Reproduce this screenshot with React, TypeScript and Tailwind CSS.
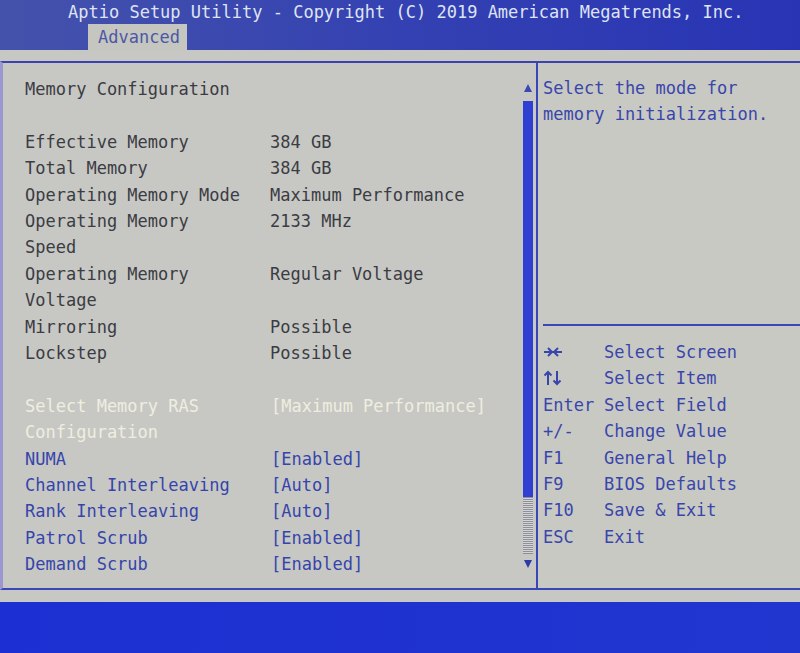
import React from 'react'

const info = [
  ['Effective Memory', '384 GB'],
  ['Total Memory', '384 GB'],
  ['Operating Memory Mode', 'Maximum Performance'],
  ['Operating Memory\nSpeed', '2133 MHz'],
  ['Operating Memory\nVoltage', 'Regular Voltage'],
  ['Mirroring', 'Possible'],
  ['Lockstep', 'Possible'],
]

const options = [
  ['NUMA', '[Enabled]'],
  ['Channel Interleaving', '[Auto]'],
  ['Rank Interleaving', '[Auto]'],
  ['Patrol Scrub', '[Enabled]'],
  ['Demand Scrub', '[Enabled]'],
]

const HArrows = () => (
  <svg width="20" height="14" viewBox="0 0 20 14" className="inline-block align-[-1px]">
    <path d="M1 7 H19" stroke="#3846ac" strokeWidth="2" />
    <path d="M5 3 L9 7 L5 11" stroke="#3846ac" strokeWidth="2" fill="none" />
    <path d="M15 3 L11 7 L15 11" stroke="#3846ac" strokeWidth="2" fill="none" />
  </svg>
)

const VArrows = () => (
  <svg width="20" height="16" viewBox="0 0 20 16" className="inline-block align-[-2px]">
    <path d="M5 2 V15" stroke="#3846ac" strokeWidth="2" />
    <path d="M1.5 5.5 L5 2 L8.5 5.5" stroke="#3846ac" strokeWidth="2" fill="none" />
    <path d="M14 1 V14" stroke="#3846ac" strokeWidth="2" />
    <path d="M10.5 10.5 L14 14 L17.5 10.5" stroke="#3846ac" strokeWidth="2" fill="none" />
  </svg>
)

const keys: [React.ReactNode, string][] = [
  [<HArrows />, 'Select Screen'],
  [<VArrows />, 'Select Item'],
  ['Enter', 'Select Field'],
  ['+/-', 'Change Value'],
  ['F1', 'General Help'],
  ['F9', 'BIOS Defaults'],
  ['F10', 'Save & Exit'],
  ['ESC', 'Exit'],
]

const Row = ({ label, value, cls, valCls }: { label: string; value: string; cls: string; valCls?: string }) => (
  <div className="flex">
    <div className={`w-[245px] whitespace-pre ${cls}`}>{label}</div>
    <div className={`whitespace-pre ${valCls ?? cls}`}>{value}</div>
  </div>
)

const App = () => {
  return (
    <div
      className="w-[800px] h-[653px] flex flex-col bg-[#c7c8c3] overflow-hidden text-[17px] leading-[26.4px]"
      style={{ fontFamily: '"DejaVu Sans Mono", "Liberation Mono", monospace' }}
    >
      {/* header */}
      <div className="h-[50px] shrink-0 bg-gradient-to-r from-[#4552ab] via-[#3441b2] to-[#2834b4] flex flex-col">
        <div className="h-[24px] pl-[68px] leading-[24px] text-[#dfe3f3] whitespace-pre">
          Aptio Setup Utility - Copyright (C) 2019 American Megatrends, Inc.
        </div>
        <div className="flex-1 flex">
          <div className="ml-[88px] w-[99px] bg-[#c5c6c0] pl-[10px] leading-[26px] text-[#4c58a6]">Advanced</div>
        </div>
      </div>

      {/* body */}
      <div className="flex-1 flex flex-col pt-[11px] pb-[12px]">
        <div className="flex-1 flex border-t-2 border-b-2 border-t-[#3a43b0] border-b-[#3a45b8] border-l-[3px] border-l-[#9a98cf]">
          {/* left pane */}
          <div className="w-[535px] shrink-0 flex border-r-2 border-r-[#3a45b8]">
            <div className="flex-1 pl-[22px] pt-[13px]">
              <div className="text-[#3b3c44]">Memory Configuration</div>
              <div className="h-[26.4px]" />
              {info.map(([l, v]) => (
                <Row key={l} label={l} value={v} cls="text-[#3b3c44]" />
              ))}
              <div className="h-[26.4px]" />
              <Row
                label={'Select Memory RAS\nConfiguration'}
                value="[Maximum Performance]"
                cls="text-[#efeee0]"
                valCls="text-[#efeee0] pl-[1px]"
              />
              {options.map(([l, v]) => (
                <Row key={l} label={l} value={v} cls="text-[#3644ac]" valCls="text-[#3644ac] pl-[1px]" />
              ))}
            </div>
            {/* scrollbar */}
            <div className="w-[10px] mr-[3px] flex flex-col items-center pt-[20px]">
              <svg width="10" height="10" viewBox="0 0 10 10">
                <path d="M1 9 L5 1 L9 9 Z" fill="#3b47b4" />
              </svg>
              <div className="mt-[8px] w-[10px] h-[396px] bg-[#2f3fd2]" />
              <div className="w-[10px] h-[57px] bg-[repeating-linear-gradient(0deg,#8d8f9c_0px,#8d8f9c_1px,#d4d4d2_1px,#d4d4d2_2px)]" />
              <svg className="mt-[5px]" width="10" height="10" viewBox="0 0 10 10">
                <path d="M1 1 L9 1 L5 9 Z" fill="#2c3aa8" />
              </svg>
            </div>
          </div>

          {/* right pane */}
          <div className="flex-1 flex flex-col bg-[#c9c9c3]">
            <div className="h-[261px] pl-[5px] pt-[12px] text-[#3846ac]">
              <div>Select the mode for</div>
              <div>memory initialization.</div>
            </div>
            <div className="ml-[5px] h-[2px] bg-[#3a46bc]" />
            <div className="pl-[5px] pt-[13px] text-[#3846ac]">
              {keys.map(([k, d]) => (
                <div key={d} className="flex whitespace-pre">
                  <div className="w-[61px]">{k}</div>
                  <div>{d}</div>
                </div>
              ))}
            </div>
          </div>
        </div>
      </div>

      {/* footer */}
      <div className="h-[51px] shrink-0 bg-gradient-to-r from-[#1c2fd2] to-[#2135cf]" />
    </div>
  )
}

export default App
